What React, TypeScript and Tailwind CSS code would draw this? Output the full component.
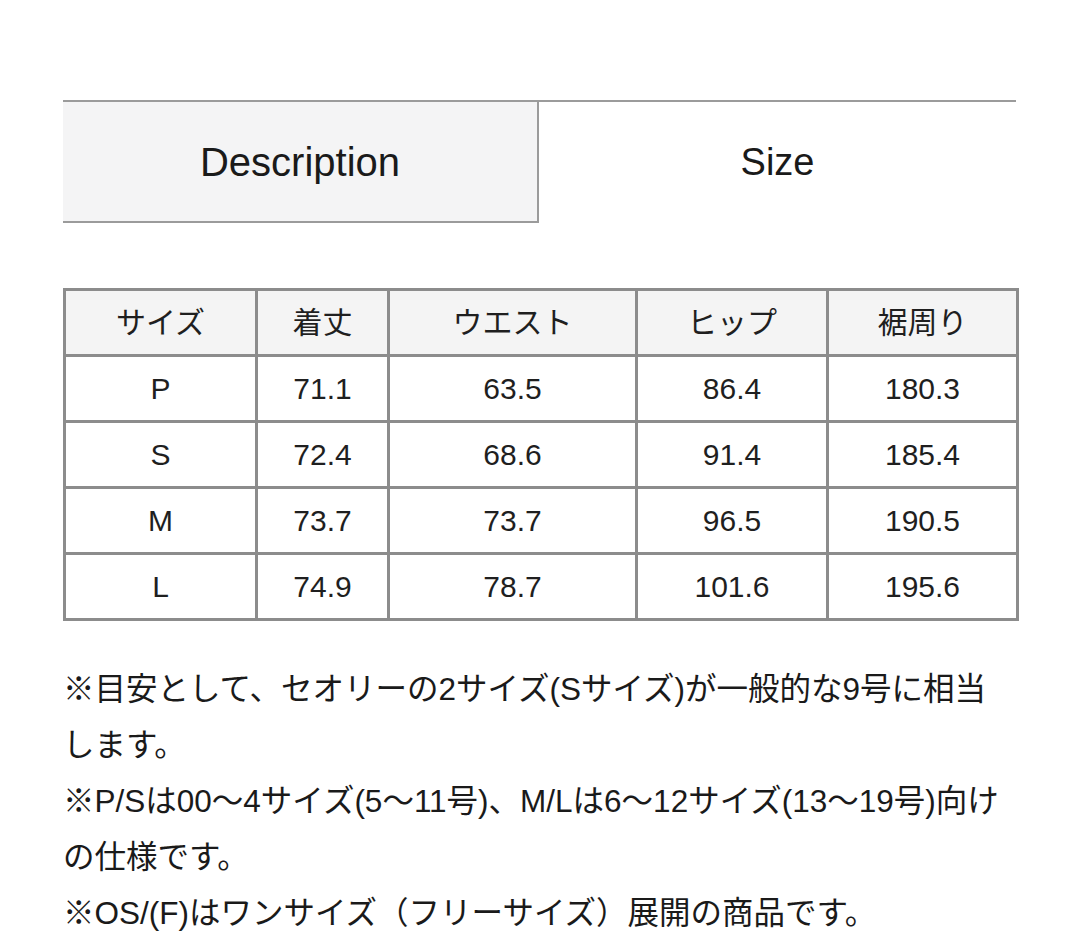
const FONT = "font-['Liberation_Sans','Noto_Sans_CJK_JP',sans-serif]";

const HEADERS = ["サイズ", "着丈", "ウエスト", "ヒップ", "裾周り"];
const COL_WIDTHS = ["w-[192px]", "w-[132px]", "w-[248px]", "w-[191px]", "w-[190px]"];

const ROWS = [
  ["P", "71.1", "63.5", "86.4", "180.3"],
  ["S", "72.4", "68.6", "91.4", "185.4"],
  ["M", "73.7", "73.7", "96.5", "190.5"],
  ["L", "74.9", "78.7", "101.6", "195.6"],
];

function Tabs() {
  return (
    <div className="flex border-t-2 border-[#9b9b9b]">
      <div className="flex h-[121px] w-[476px] items-center justify-center border-b-2 border-r-2 border-[#9b9b9b] bg-[#f4f4f5] text-[40px] text-[#1a1a1a]">
        Description
      </div>
      <div className="flex h-[121px] flex-1 items-center justify-center bg-white text-[38px] text-[#1a1a1a]">
        Size
      </div>
    </div>
  );
}

function SizeTable() {
  return (
    <table className="mt-[65px] w-[951px] table-fixed border-collapse border-[3px] border-[#8c8c8c] text-[30px] text-[#1f1f1f]">
      <colgroup>
        {COL_WIDTHS.map((w, i) => (
          <col key={i} className={w} />
        ))}
      </colgroup>
      <thead>
        <tr className="h-[66px] bg-[#f4f4f4]">
          {HEADERS.map((h) => (
            <th key={h} className="border-[3px] border-[#8c8c8c] text-center font-normal">
              {h}
            </th>
          ))}
        </tr>
      </thead>
      <tbody>
        {ROWS.map((row) => (
          <tr key={row[0]} className="h-[66px] bg-white">
            {row.map((cell, i) => (
              <td key={i} className="border-[3px] border-[#8c8c8c] text-center">
                {cell}
              </td>
            ))}
          </tr>
        ))}
      </tbody>
    </table>
  );
}

export default function App() {
  return (
    <div className={`min-h-[935px] bg-white pl-[63px] pt-[100px] ${FONT}`}>
      <div className="w-[953px]">
        <Tabs />
        <SizeTable />
        <div className="mt-[40px] text-[31.5px] leading-[56px] text-[#1a1a1a] whitespace-nowrap">
          <p>
            ※目安として、セオリーの2サイズ(Sサイズ)が一般的な9号に相当
            <br />
            します。
          </p>
          <p>
            ※P/Sは00〜4サイズ(5〜11号)、M/Lは6〜12サイズ(13〜19号)向け
            <br />
            の仕様です。
          </p>
          <p>※OS/(F)はワンサイズ（フリーサイズ）展開の商品です。</p>
        </div>
      </div>
    </div>
  );
}
